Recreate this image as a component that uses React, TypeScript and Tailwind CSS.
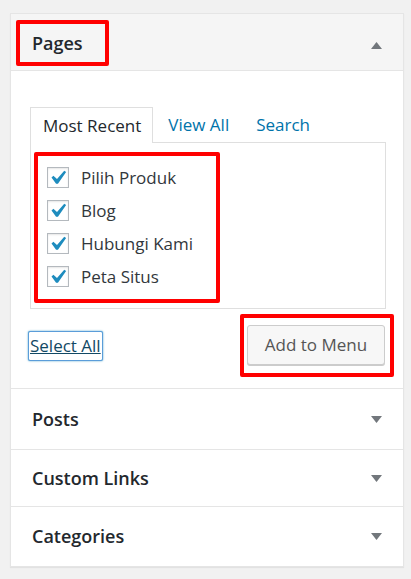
import React from "react";

const PAGES = ["Pilih Produk", "Blog", "Hubungi Kami", "Peta Situs"];
const OTHERS = [
  { title: "Posts", h: "h-[61px]" },
  { title: "Custom Links", h: "h-[57px]" },
  { title: "Categories", h: "h-[59px]" },
];

function Arrow({ up }: { up?: boolean }) {
  return (
    <svg width="11" height="7" viewBox="0 0 11 7" className="shrink-0">
      <polygon points={up ? "5.5,0 11,7 0,7" : "0,0 11,0 5.5,7"} fill="#72777c" />
    </svg>
  );
}

function Checkbox() {
  return (
    <span className="flex h-[21px] w-[22px] shrink-0 items-center justify-center border border-[#b4b9be] bg-white shadow-[inset_0_1px_2px_rgba(0,0,0,0.1)]">
      <svg width="19" height="19" viewBox="4 3 13.5 13.5">
        <path d="M14.83 4.89l1.34.94-5.81 8.38H9.02L5.78 9.67l1.34-1.25 2.57 2.4z" fill="#1e8cbe" />
      </svg>
    </span>
  );
}

export default function App() {
  return (
    <div
      className="h-[579px] w-[411px] bg-[#f1f1f1] pl-[10px] pr-[7px] pt-[13px]"
      style={{ fontFamily: '"Open Sans", "Noto Sans", sans-serif' }}
    >
      <div className="border border-[#e5e5e5] bg-white shadow-[0_1px_1px_rgba(0,0,0,0.06)]">
        {/* Pages (open) */}
        <div className="flex h-[57px] items-start justify-between border-b border-[#e5e5e5] bg-[#f5f5f5] pl-[5px] pr-[21px] pt-[6px]">
          <span className="flex h-[46px] items-center rounded-[2px] border-4 border-[#ff0000] pl-[12px] pr-[22px] text-[18px] font-semibold text-[#23282d]">
            Pages
          </span>
          <span className="mt-[22px]">
            <Arrow up />
          </span>
        </div>

        <div className="border-b border-[#e5e5e5] pb-[11px] pl-[19px] pr-[9px] pt-[36px]">
          <div className="mr-[8px]">
            <div className="flex h-[35px] items-stretch text-[17px]">
              <span className="relative -mb-px flex items-center border border-b-0 border-[#dfdfdf] bg-white pl-[12px] pr-[11px] text-[#23282d]">
                Most Recent
              </span>
              <span className="flex items-center pl-[15px] pr-[15px] text-[#0073aa]">View All</span>
              <span className="flex items-center px-[12px] text-[#0073aa]">Search</span>
            </div>
            <div className="h-[167px] border border-[#dfdfdf] bg-white pl-[3px] pt-[9px]">
              <div className="flex w-[186px] flex-col gap-[12px] rounded-[2px] border-4 border-[#ff0000] pb-[12px] pl-[9px] pt-[11px]">
                {PAGES.map((p) => (
                  <label key={p} className="flex h-[21px] items-center gap-[12px] text-[17px] text-[#32373c]">
                    <Checkbox />
                    {p}
                  </label>
                ))}
              </div>
            </div>
          </div>

          <div className="mt-[5px] flex items-center justify-between">
            <a
              href="#"
              className="-ml-px flex h-[28px] items-center rounded-[1px] px-px text-[17px] text-[#124964] underline shadow-[0_0_0_1px_#5b9dd9,0_0_2px_1px_rgba(30,140,190,0.8)]"
            >
              Select All
            </a>
            <div className="rounded-[2px] border-4 border-[#ff0000] pb-[8px] pl-[3px] pr-[5px] pt-[7px]">
              <button className="flex h-[40px] w-[138px] items-center justify-center rounded-[3px] border border-[#cccccc] bg-[#f7f7f7] text-[17px] text-[#555555] shadow-[0_1px_0_#cccccc]">
                Add to Menu
              </button>
            </div>
          </div>
        </div>

        {OTHERS.map((s, i) => (
          <div
            key={s.title}
            className={`flex ${s.h} items-center justify-between pl-[21px] pr-[21px] ${i < OTHERS.length - 1 ? "border-b border-[#e5e5e5]" : ""}`}
          >
            <span className="text-[18px] font-semibold text-[#23282d]">{s.title}</span>
            <Arrow />
          </div>
        ))}
      </div>
    </div>
  );
}
